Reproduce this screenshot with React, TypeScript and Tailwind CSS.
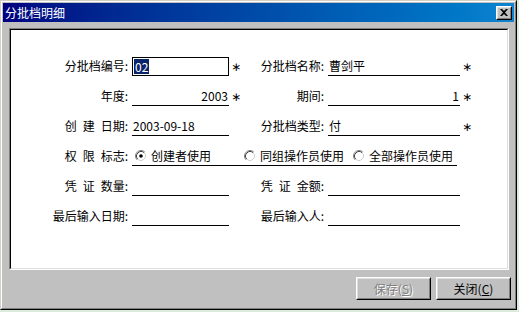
const FONT = "font-['Noto_Sans_CJK_SC',sans-serif]";

function Radio({ checked }: { checked?: boolean }) {
  return (
    <svg width="12" height="12" viewBox="0 0 12 12" className="shrink-0">
      <circle cx="6" cy="6" r="5" fill="#fff" />
      <path d="M2.11 9.89 A5.5 5.5 0 0 1 9.89 2.11" fill="none" stroke="#808080" strokeWidth="1" />
      <path d="M9.89 2.11 A5.5 5.5 0 0 1 2.11 9.89" fill="none" stroke="#ffffff" strokeWidth="1" />
      <path d="M2.82 9.18 A4.5 4.5 0 0 1 9.18 2.82" fill="none" stroke="#404040" strokeWidth="1" />
      <path d="M9.18 2.82 A4.5 4.5 0 0 1 2.82 9.18" fill="none" stroke="#d4d0c8" strokeWidth="1" />
      {checked && <circle cx="6" cy="6" r="1.8" fill="#000" />}
    </svg>
  );
}

function Label({ text }: { text: string }) {
  return (
    <div className="h-[30px] flex items-end justify-end pr-[4px]">
      <span className="leading-[20px] whitespace-nowrap">{text}</span>
    </div>
  );
}

function Value({ text, right }: { text?: string; right?: boolean }) {
  return (
    <div className="h-[30px] flex items-end">
      <div
        className={
          right
            ? 'w-full h-[20px] border-b border-black leading-[19px] text-right pr-[1px]'
            : 'w-full h-[20px] border-b border-black leading-[19px] pl-[1px]'
        }
      >
        {text}
      </div>
    </div>
  );
}

function Star({ show }: { show?: boolean }) {
  return (
    <div className="h-[30px] flex items-end pl-[2px]">
      <span className="leading-[18px] text-[12px] font-['DejaVu_Sans',sans-serif]">{show ? '\u2217' : ''}</span>
    </div>
  );
}

function Btn({ label, hot, disabled }: { label: string; hot: string; disabled?: boolean }) {
  return (
    <div className="w-[75px] h-[23px] border border-t-white border-l-white border-b-black border-r-black">
      <div className="w-full h-full border border-t-[#dfdfdf] border-l-[#dfdfdf] border-b-[#808080] border-r-[#808080] flex items-center justify-center">
        <span
          className={
            disabled
              ? 'text-[#808080] [text-shadow:1px_1px_0_#ffffff] leading-[16px]'
              : 'text-black leading-[16px]'
          }
        >
          {label}(<span className="underline">{hot}</span>)
        </span>
      </div>
    </div>
  );
}

export default function App() {
  const sp = '\u2002';
  return (
    <div className={`w-[519px] h-[312px] bg-[#dcecdc] text-[12px] text-black ${FONT}`}>
      <div className="w-[517px] h-[310px] border border-t-[#d4d0c8] border-l-[#d4d0c8] border-b-black border-r-black">
        <div className="w-full h-full border border-t-white border-l-white border-b-[#808080] border-r-[#808080] bg-[#c0c0c0] p-[1px] flex flex-col">
          {/* title bar */}
          <div className="h-[19px] bg-linear-to-r from-[#000080] to-[#1084d0] flex items-center justify-between pl-[2px] pr-[2px]">
            <span className="text-white text-[12px] leading-[19px]">分批档明细</span>
            <div className="w-[16px] h-[14px] border border-t-white border-l-white border-b-black border-r-black bg-[#c0c0c0]">
              <div className="w-full h-full border border-t-[#dfdfdf] border-l-[#dfdfdf] border-b-[#808080] border-r-[#808080] flex items-center justify-center">
                <svg width="8" height="7" viewBox="0 0 8 7">
                  <path d="M0 0 L2 0 L4 2 L6 0 L8 0 L5 3.5 L8 7 L6 7 L4 5 L2 7 L0 7 L3 3.5 Z" fill="#000" />
                </svg>
              </div>
            </div>
          </div>

          {/* panel */}
          <div className="mt-[6px] ml-[6px] mr-[5px] h-[242px] border border-t-[#808080] border-l-[#808080] border-b-white border-r-white">
            <div className="w-full h-full border border-t-black border-l-black border-b-[#dfdfdf] border-r-[#dfdfdf] bg-white pt-[16px]">
              <div className="grid grid-cols-[121px_97px_28px_71px_132px_1fr]">
                {/* row 1 */}
                <Label text="分批档编号:" />
                <div className="h-[30px] flex items-end">
                  <div className="w-full h-[19px] border border-black flex items-center pl-[1px]">
                    <span className="bg-[#0a246a] text-white leading-[15px] px-[1px]">02</span>
                  </div>
                </div>
                <Star show />
                <Label text="分批档名称:" />
                <Value text="曹剑平" />
                <Star show />

                {/* row 2 */}
                <Label text="年度:" />
                <Value text="2003" right />
                <Star show />
                <Label text="期间:" />
                <Value text="1" right />
                <Star show />

                {/* row 3 */}
                <Label text={`创${sp}建${sp}日期:`} />
                <Value text="2003-09-18" />
                <Star />
                <Label text="分批档类型:" />
                <Value text="付" />
                <Star show />

                {/* row 4 */}
                <Label text={`权${sp}限${sp}标志:`} />
                <div className="col-span-4 h-[30px] flex items-end">
                  <div className="w-[325px] h-[20px] border-b border-black flex items-center pl-[3px]">
                    <div className="w-[109px] flex items-center gap-[4px]">
                      <Radio checked />
                      <span className="leading-[19px]">创建者使用</span>
                    </div>
                    <div className="w-[109px] flex items-center gap-[4px]">
                      <Radio />
                      <span className="leading-[19px]">同组操作员使用</span>
                    </div>
                    <div className="w-[104px] flex items-center gap-[4px]">
                      <Radio />
                      <span className="leading-[19px] whitespace-nowrap">全部操作员使用</span>
                    </div>
                  </div>
                </div>
                <Star />

                {/* row 5 */}
                <Label text={`凭${sp}证${sp}数量:`} />
                <Value />
                <Star />
                <Label text={`凭${sp}证${sp}金额:`} />
                <Value />
                <Star />

                {/* row 6 */}
                <Label text="最后输入日期:" />
                <Value />
                <Star />
                <Label text="最后输入人:" />
                <Value />
                <Star />
              </div>
            </div>
          </div>

          {/* buttons */}
          <div className="mt-[7px] flex justify-end gap-[5px] pr-[3px]">
            <Btn label="保存" hot="S" disabled />
            <Btn label="关闭" hot="C" />
          </div>
        </div>
      </div>
    </div>
  );
}
